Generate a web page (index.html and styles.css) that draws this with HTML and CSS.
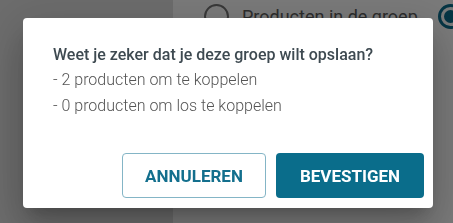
FILE: index.html
```html
<!DOCTYPE html>
<html lang="nl">
<head>
  <meta charset="UTF-8" />
  <meta name="viewport" content="width=device-width, initial-scale=1.0" />
  <title>Groep opslaan</title>
  <link rel="stylesheet" href="styles.css">
</head>
<body>

  <!-- PAGE BEHIND THE DIALOG -->
  <div class="page">
    <aside class="sidebar"></aside>
    <main class="content">
      <div class="radio-row">
        <label class="radio">
          <span class="radio-circle"></span>
          <span class="radio-label">Producten in de groep</span>
        </label>
        <label class="radio">
          <span class="radio-circle checked"></span>
        </label>
      </div>
    </main>
  </div>

  <!-- CONFIRM DIALOG -->
  <div class="backdrop"></div>
  <div class="dialog" role="dialog">
    <div class="dialog-body">
      <p class="dialog-title">Weet je zeker dat je deze groep wilt opslaan?</p>
      <p class="dialog-line">- 2 producten om te koppelen</p>
      <p class="dialog-line">- 0 producten om los te koppelen</p>
    </div>
    <div class="dialog-actions">
      <button class="btn btn-outline">ANNULEREN</button>
      <button class="btn btn-primary">BEVESTIGEN</button>
    </div>
  </div>

</body>
</html>
```

FILE: styles.css
```css
/* RESET */
*, *::before, *::after {
  box-sizing: border-box;
  margin: 0;
  padding: 0;
}

body {
  font-family: Roboto, 'Liberation Sans', Arial, sans-serif;
  background-color: #fff;
  color: #333;
  overflow: hidden;
}

/* PAGE */
.page {
  display: flex;
  height: 100vh;
}

.sidebar {
  width: 173px;
  flex-shrink: 0;
  background-color: #e2e2e2;
}

.content {
  flex: 1;
  background-color: #fff;
  padding: 4px 0 0 31px;
}

.radio-row {
  display: flex;
  align-items: center;
  gap: 20px;
  white-space: nowrap;
}

.radio {
  display: flex;
  align-items: center;
  gap: 13px;
}

.radio-circle {
  flex-shrink: 0;
  width: 25px;
  height: 25px;
  border: 2px solid #767676;
  border-radius: 50%;
  display: flex;
  justify-content: center;
  align-items: center;
}

.radio-circle.checked {
  border: 3px solid #0b6e8e;
}

.radio-circle.checked::after {
  content: '';
  width: 13px;
  height: 13px;
  border-radius: 50%;
  background-color: #0b6e8e;
}

.radio-label {
  font-size: 18px;
  color: #5e5e5e;
}

/* DIALOG */
.backdrop {
  position: fixed;
  inset: 0;
  background: rgba(0, 0, 0, 0.52);
}

.dialog {
  position: fixed;
  top: 18px;
  left: 23px;
  width: 410px;
  height: 190px;
  background: #fff;
  border-radius: 4px;
  box-shadow: 0 11px 15px -7px rgba(0,0,0,0.2), 0 24px 38px 3px rgba(0,0,0,0.14), 0 9px 46px 8px rgba(0,0,0,0.12);
  display: flex;
  flex-direction: column;
}

.dialog-body {
  padding: 24px 20px 0 30px;
  flex: 1;
}

.dialog-title {
  font-size: 16px;
  font-weight: 500;
  line-height: 25px;
  color: #3e4a51;
}

.dialog-line {
  font-size: 16px;
  font-weight: 300;
  line-height: 25.5px;
  color: #555;
}

.dialog-actions {
  display: flex;
  justify-content: flex-end;
  gap: 10px;
  padding: 0 9px 10px 0;
}

.btn {
  height: 45px;
  font-family: inherit;
  font-size: 17px;
  font-weight: 700;
  border-radius: 4px;
  cursor: pointer;
}

.btn-outline {
  width: 144px;
  background: #fff;
  color: #136f8d;
  border: 1px solid #84b5c6;
}

.btn-primary {
  width: 148px;
  background: #0a6d8b;
  color: #fff;
  border: none;
}
```
